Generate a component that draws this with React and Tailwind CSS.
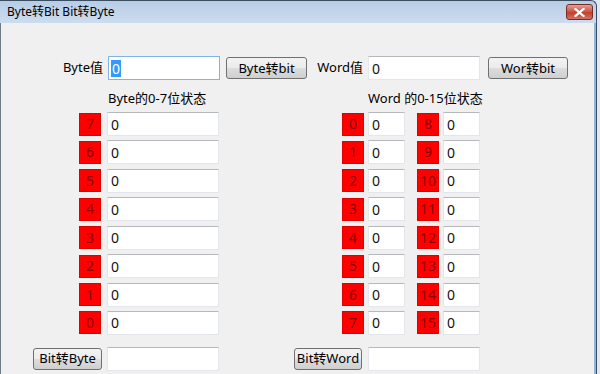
import React from "react";

const Bit = ({ n }) => (
  <div className="w-[22px] h-[23px] bg-[#ff0000] border border-[#e00000] flex items-center justify-center text-[14px] text-[#8a0000] leading-none">
    {n}
  </div>
);

const Field = ({ w, children }) => (
  <div className={`${w} h-[24px] bg-white border border-[#e3e6ea] border-t-[#b5b8bd] flex items-center pl-[3px] text-[14px] text-[#111]`}>
    {children}
  </div>
);

const Btn = ({ w, children }) => (
  <div className={`${w} h-[22px] rounded-[3px] border border-[#707070] bg-[linear-gradient(to_bottom,#f3f3f3_0%,#ebebeb_50%,#dddddd_51%,#cfcfcf_100%)] flex items-center justify-center text-[13px] text-black leading-none`}>
    {children}
  </div>
);

export default function App() {
  const byteBits = [7, 6, 5, 4, 3, 2, 1, 0];
  const w1 = [0, 1, 2, 3, 4, 5, 6, 7];
  const w2 = [8, 9, 10, 11, 12, 13, 14, 15];
  return (
    <div className="w-[600px] h-[374px] overflow-hidden bg-[#dfe9f5] flex font-['Noto_Sans','Noto_Sans_CJK_SC',sans-serif] text-[13px] text-black">
      <div className="w-[597px] h-full flex flex-col">
        {/* title bar */}
        <div className="h-[23px] shrink-0 rounded-tr-[6px] border-t border-r border-[#3c4d60] bg-[linear-gradient(to_bottom,#b7cde6,#cddcee)] flex items-center pl-[7px] pr-[3px]">
          <span className="text-[12px] leading-none">Byte转Bit Bit转Byte</span>
          <div className="ml-auto w-[27px] h-[16px] rounded-[3px] border border-[#7a2c24] bg-[linear-gradient(to_bottom,#e3a195_0%,#cd5a4a_45%,#c1402f_55%,#d27266_100%)] flex items-center justify-center">
            <svg width="11" height="9" viewBox="0 0 11 9">
              <path d="M1.5 1 L9.5 8 M9.5 1 L1.5 8" stroke="#fff" strokeWidth="2.2" strokeLinecap="square" />
            </svg>
          </div>
        </div>
        {/* body */}
        <div className="flex-1 flex">
          <div className="w-[1px] bg-[#6d7a88]" />
          <div className="flex-1 bg-[#f0f0f0] flex flex-col pt-[33px]">
            {/* row 1 */}
            <div className="flex items-center h-[24px]">
              <div className="w-[103px] text-right pr-[1px]">Byte值</div>
              <div className="ml-[4px] w-[112px] h-[24px] bg-white border border-[#7eb4ea] flex items-center pl-[2px] text-[14px]">
                <span className="bg-[#3399ff] text-white px-[1px] leading-[17px]">0</span>
              </div>
              <div className="ml-[6px]"><Btn w="w-[81px]">Byte转bit</Btn></div>
              <div className="w-[57px] text-right pr-[1px]">Word值</div>
              <div className="ml-[4px]"><Field w="w-[112px]">0</Field></div>
              <div className="ml-[8px]"><Btn w="w-[80px]">Wor转bit</Btn></div>
            </div>
            {/* headings */}
            <div className="flex mt-[10px] h-[18px] items-center">
              <div className="ml-[107px] w-[260px]">Byte的0-7位状态</div>
              <div>Word 的0-15位状态</div>
            </div>
            {/* bits */}
            <div className="flex mt-[4px]">
              <div className="ml-[78px] flex flex-col gap-[4.43px]">
                {byteBits.map((n) => (
                  <div key={n} className="flex items-center h-[24px]">
                    <div className="w-[23px]"><Bit n={n} /></div>
                    <div className="ml-[5px]"><Field w="w-[112px]">0</Field></div>
                  </div>
                ))}
              </div>
              <div className="ml-[123px] flex gap-[12px]">
                {[w1, w2].map((col, i) => (
                  <div key={i} className="flex flex-col gap-[4.43px]">
                    {col.map((n) => (
                      <div key={n} className="flex items-center h-[24px]">
                        <Bit n={n} />
                        <div className="ml-[4px]"><Field w="w-[37px]">0</Field></div>
                      </div>
                    ))}
                  </div>
                ))}
              </div>
            </div>
            {/* bottom row */}
            <div className="flex items-center mt-[12px] h-[24px]">
              <div className="ml-[32px]"><Btn w="w-[69px]">Bit转Byte</Btn></div>
              <div className="ml-[5px]"><Field w="w-[112px]" /></div>
              <div className="ml-[75px]"><Btn w="w-[68px]">Bit转Word</Btn></div>
              <div className="ml-[6px]"><Field w="w-[112px]" /></div>
            </div>
          </div>
          <div className="w-[2px] bg-[#8fb4de]" />
          <div className="w-[1px] bg-[#3c4d60]" />
        </div>
      </div>
    </div>
  );
}
